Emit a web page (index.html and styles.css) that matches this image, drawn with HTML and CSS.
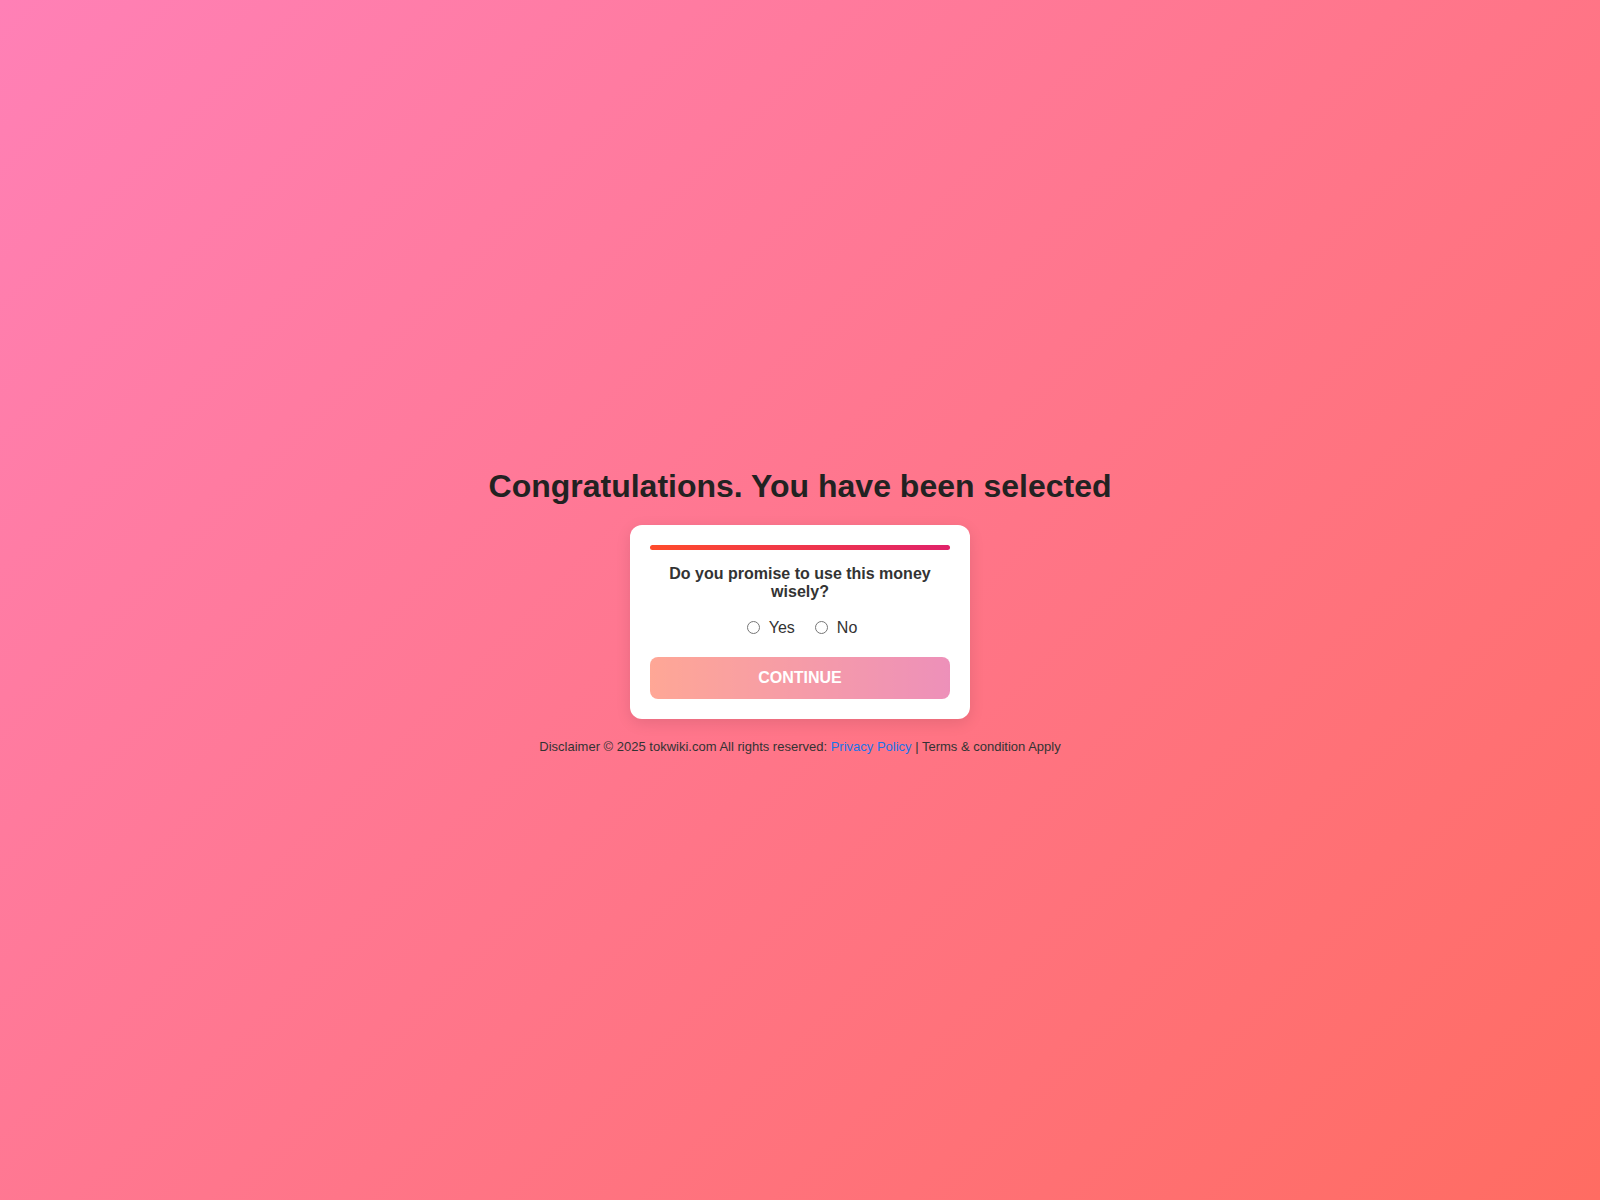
FILE: index.html
```html
<!DOCTYPE html>
<html lang="en">
<head>
<meta charset="utf-8">
<title>Congratulations</title>
<link rel="stylesheet" href="styles.css">
</head>
<body>
<main class="page">
  <h1 class="title">Congratulations. You have been selected</h1>
  <div class="card">
    <div class="progress"></div>
    <h3 class="question">Do you promise to use this money wisely?</h3>
    <div class="options">
      <label class="option"><input type="radio" name="promise" value="yes"> Yes</label>
      <label class="option"><input type="radio" name="promise" value="no"> No</label>
    </div>
    <button class="continue" type="button" disabled>CONTINUE</button>
  </div>
  <p class="footer">Disclaimer © 2025 tokwiki.com All rights reserved: <a href="#" class="link">Privacy Policy</a> | Terms &amp; condition Apply</p>
</main>
</body>
</html>
```
FILE: styles.css
```css
html, body {
  margin: 0;
  padding: 0;
}
body {
  font-family: "Liberation Sans", Arial, sans-serif;
  background: linear-gradient(135deg, #ff80b6 0%, #ff6c62 100%);
  min-height: 100vh;
  color: #333;
}
.page {
  box-sizing: border-box;
  min-height: 100vh;
  padding-top: 22px;
  display: flex;
  flex-direction: column;
  align-items: center;
  justify-content: center;
}
.title {
  font-size: 32px;
  font-weight: bold;
  color: #222;
  margin: 0 0 20px;
  text-align: center;
}
.card {
  background: #fff;
  width: 300px;
  padding: 20px;
  border-radius: 12px;
  box-shadow: 0 4px 15px rgba(0,0,0,0.1);
  text-align: center;
}
.progress {
  height: 5px;
  border-radius: 3px;
  background: linear-gradient(to right, #ff4b2b, #e0226a);
  margin-bottom: 15px;
}
.question {
  font-size: 16px;
  font-weight: bold;
  color: #333;
  margin: 0 0 17px;
  line-height: 18px;
}
.options {
  display: flex;
  justify-content: center;
  gap: 20px;
  padding-left: 4px;
  margin-bottom: 20px;
  font-size: 16px;
  line-height: 19px;
  color: #333;
}
.option {
  display: inline-flex;
  align-items: center;
  gap: 9px;
}
.option input {
  margin: 0;
  width: 13px;
  height: 13px;
}
.continue {
  display: block;
  width: 100%;
  height: 42px;
  border: none;
  border-radius: 8px;
  background: linear-gradient(to right, #ff512f, #dd2476);
  opacity: 0.5;
  color: #fff;
  font-family: "Liberation Sans", Arial, sans-serif;
  font-size: 16px;
  font-weight: bold;
}
.footer {
  font-size: 13px;
  color: #333;
  margin: 20px 0 0;
}
.link {
  color: #1a73e8;
  text-decoration: none;
}
```
